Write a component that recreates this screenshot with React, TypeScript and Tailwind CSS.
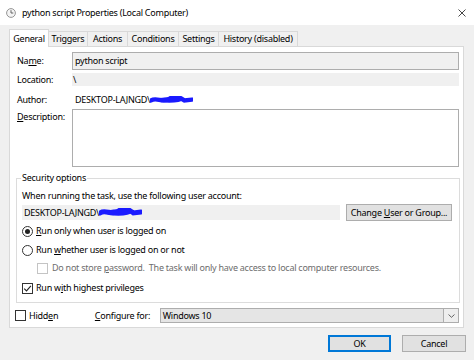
import React from "react";

const U = ({ children }: { children: React.ReactNode }) => (
  <span className="underline underline-offset-[1px] decoration-[1px]">{children}</span>
);

const Scribble = ({ w, h }: { w: number; h: number }) => (
  <svg width={w} height={h} viewBox={`0 0 ${w} ${h}`} className="shrink-0">
    <path
      d={`M1 ${h * 0.55} C ${w * 0.15} ${h * 0.1}, ${w * 0.3} ${h * 0.9}, ${w * 0.45} ${h * 0.35} S ${w * 0.7} ${h * 0.2}, ${w * 0.8} ${h * 0.55} L ${w - 1} ${h * 0.45}`}
      stroke="#1a1aff"
      strokeWidth={h * 0.55}
      fill="none"
      strokeLinecap="round"
    />
    <ellipse cx={w * 0.45} cy={h * 0.5} rx={w * 0.3} ry={h * 0.35} fill="#1a1aff" />
  </svg>
);

const Checkbox = ({ checked, disabled }: { checked?: boolean; disabled?: boolean }) => (
  <div
    className={`w-[11px] h-[11px] shrink-0 border bg-white flex items-center justify-center ${
      disabled ? "border-[#c4c4c4]" : "border-[#333333]"
    }`}
  >
    {checked && (
      <svg width="9" height="9" viewBox="0 0 9 9">
        <path d="M1.2 4.6 L3.5 6.9 L7.9 1.8" stroke="#222" strokeWidth="1.1" fill="none" />
      </svg>
    )}
  </div>
);

const Radio = ({ checked }: { checked?: boolean }) => (
  <div className="w-[11px] h-[11px] shrink-0 rounded-full border border-[#333333] bg-white flex items-center justify-center">
    {checked && <div className="w-[5px] h-[5px] rounded-full bg-[#222]" />}
  </div>
);

export default function App() {
  return (
    <div className="w-[474px] h-[360px] bg-[#f0f0f0] flex flex-col overflow-hidden text-black font-['Noto_Sans',sans-serif] text-[9px] leading-[12px] tracking-[-0.25px]">
      {/* Title bar */}
      <div className="h-[25px] bg-white flex items-center pl-[6px] pr-[8px] shrink-0">
        <svg width="10" height="10" viewBox="0 0 10 10" className="shrink-0">
          <circle cx="5" cy="5" r="4.4" fill="#f4f4f4" stroke="#8a8a8a" strokeWidth="0.9" />
          <path d="M5 2.2 V5 H7.3" stroke="#555" strokeWidth="0.9" fill="none" />
        </svg>
        <div className="ml-[6px] flex-1">python script Properties (Local Computer)</div>
        <svg width="8" height="8" viewBox="0 0 8 8" className="shrink-0">
          <path d="M0.5 0.5 L7.5 7.5 M7.5 0.5 L0.5 7.5" stroke="#333" strokeWidth="0.9" />
        </svg>
      </div>

      {/* Body */}
      <div className="flex-1 pl-[9px] pr-[10px] pt-[4px] flex flex-col">
        {/* Tabs */}
        <div className="flex items-end h-[18px] -mb-px relative z-10">
          <div className="w-[40px] h-[18px] bg-white border border-[#d9d9d9] border-b-0 flex items-center justify-center">
            General
          </div>
          {[
            ["Triggers", "w-[39px]"],
            ["Actions", "w-[40px]"],
            ["Conditions", "w-[51px]"],
            ["Settings", "w-[40px]"],
            ["History (disabled)", "w-[79px]"],
          ].map(([t, w]) => (
            <div
              key={t}
              className={`${w} h-[15px] mb-px border-t border-r border-[#d9d9d9] bg-[#f0f0f0] flex items-center justify-center`}
            >
              {t}
            </div>
          ))}
        </div>

        {/* Panel */}
        <div className="h-[282px] bg-white border border-[#d9d9d9] pl-[7px] pr-[4px] pt-[5px] flex flex-col">
          <div className="flex h-[18px] items-center">
            <div className="w-[55px]">
              Na<U>m</U>e:
            </div>
            <div className="w-[387px] h-[18px] bg-[#f0f0f0] border border-[#adadad] flex items-center pl-[2px]">
              python script
            </div>
          </div>
          <div className="flex h-[13px] items-center mt-[3px]">
            <div className="w-[55px]">Location:</div>
            <div className="w-[387px] h-[13px] bg-[#f0f0f0] flex items-center pl-[1px]">\</div>
          </div>
          <div className="flex h-[14px] items-center mt-[7px]">
            <div className="w-[55px]">Author:</div>
            <div className="flex items-center pl-[3px]">
              <span>DESKTOP-LAJNGD\</span>
              <Scribble w={43} h={8} />
            </div>
          </div>
          <div className="flex h-[58px] mt-[2px]">
            <div className="w-[55px] pt-[2px]">
              <U>D</U>escription:
            </div>
            <div className="w-[387px] h-[58px] bg-white border border-[#adadad]" />
          </div>

          {/* Security options */}
          <fieldset className="-ml-px mt-[5px] w-[444px] h-[131px] border border-[#dcdcdc] pl-[5px]">
            <legend className="px-[1px] -ml-px leading-[12px]">Security options</legend>
            <div className="pt-[6px] h-[18px] flex items-center">
              <span>When running the task, use the following user account:</span>
            </div>
            <div className="flex items-center h-[17px] mt-[2px]">
              <div className="w-[318px] h-[15px] bg-[#f0f0f0] flex items-center pl-[2px]">
                <span>DESKTOP-LAJNGD\</span>
                <Scribble w={43} h={9} />
              </div>
              <div className="ml-[6px] w-[106px] h-[17px] bg-[#e1e1e1] border border-[#adadad] flex items-center justify-center">
                <span>
                  Change <U>U</U>ser or Group...
                </span>
              </div>
            </div>
            <div className="flex items-center h-[14px] mt-[3px]">
              <Radio checked />
              <span className="ml-[3px]">
                <U>R</U>un only when user is logged on
              </span>
            </div>
            <div className="flex items-center h-[14px] mt-[5px]">
              <Radio />
              <span className="ml-[3px]">
                Run <U>w</U>hether user is logged on or not
              </span>
            </div>
            <div className="flex items-center h-[14px] mt-[4px] pl-[15px] text-[#6d6d6d]">
              <Checkbox disabled />
              <span className="ml-[4px] whitespace-pre">
                Do not store <U>p</U>assword.  The task will only have access to local computer resources.
              </span>
            </div>
            <div className="flex items-center h-[14px] mt-[6px]">
              <Checkbox checked />
              <span className="ml-[3px]">
                Run w<U>i</U>th highest privileges
              </span>
            </div>
          </fieldset>

          {/* Hidden / Configure */}
          <div className="flex items-center h-[15px] mt-[5px] -ml-[2px]">
            <Checkbox />
            <span className="ml-[3px] w-[66px]">
              Hidd<U>e</U>n
            </span>
            <span className="w-[65px]">
              <U>C</U>onfigure for:
            </span>
            <div className="w-[300px] h-[15px] flex border border-[#adadad] bg-[#e5e5e5]">
              <div className="flex-1 flex items-center pl-[2px] border-r border-[#adadad]">Windows 10</div>
              <div className="w-[14px] flex items-center justify-center bg-[#eeeeee]">
                <svg width="7" height="4" viewBox="0 0 7 4">
                  <path d="M0.5 0.5 L3.5 3.3 L6.5 0.5" stroke="#555" strokeWidth="0.9" fill="none" />
                </svg>
              </div>
            </div>
          </div>
        </div>

        {/* Buttons */}
        <div className="flex justify-end gap-[11px] mt-[7px] -mr-[2px]">
          <div className="w-[63px] h-[17px] bg-[#e1e1e1] border border-[#0078d7] shadow-[inset_0_0_0_1px_#0078d7] flex items-center justify-center">
            OK
          </div>
          <div className="w-[64px] h-[17px] bg-[#e1e1e1] border border-[#adadad] flex items-center justify-center">
            Cancel
          </div>
        </div>
      </div>
    </div>
  );
}
